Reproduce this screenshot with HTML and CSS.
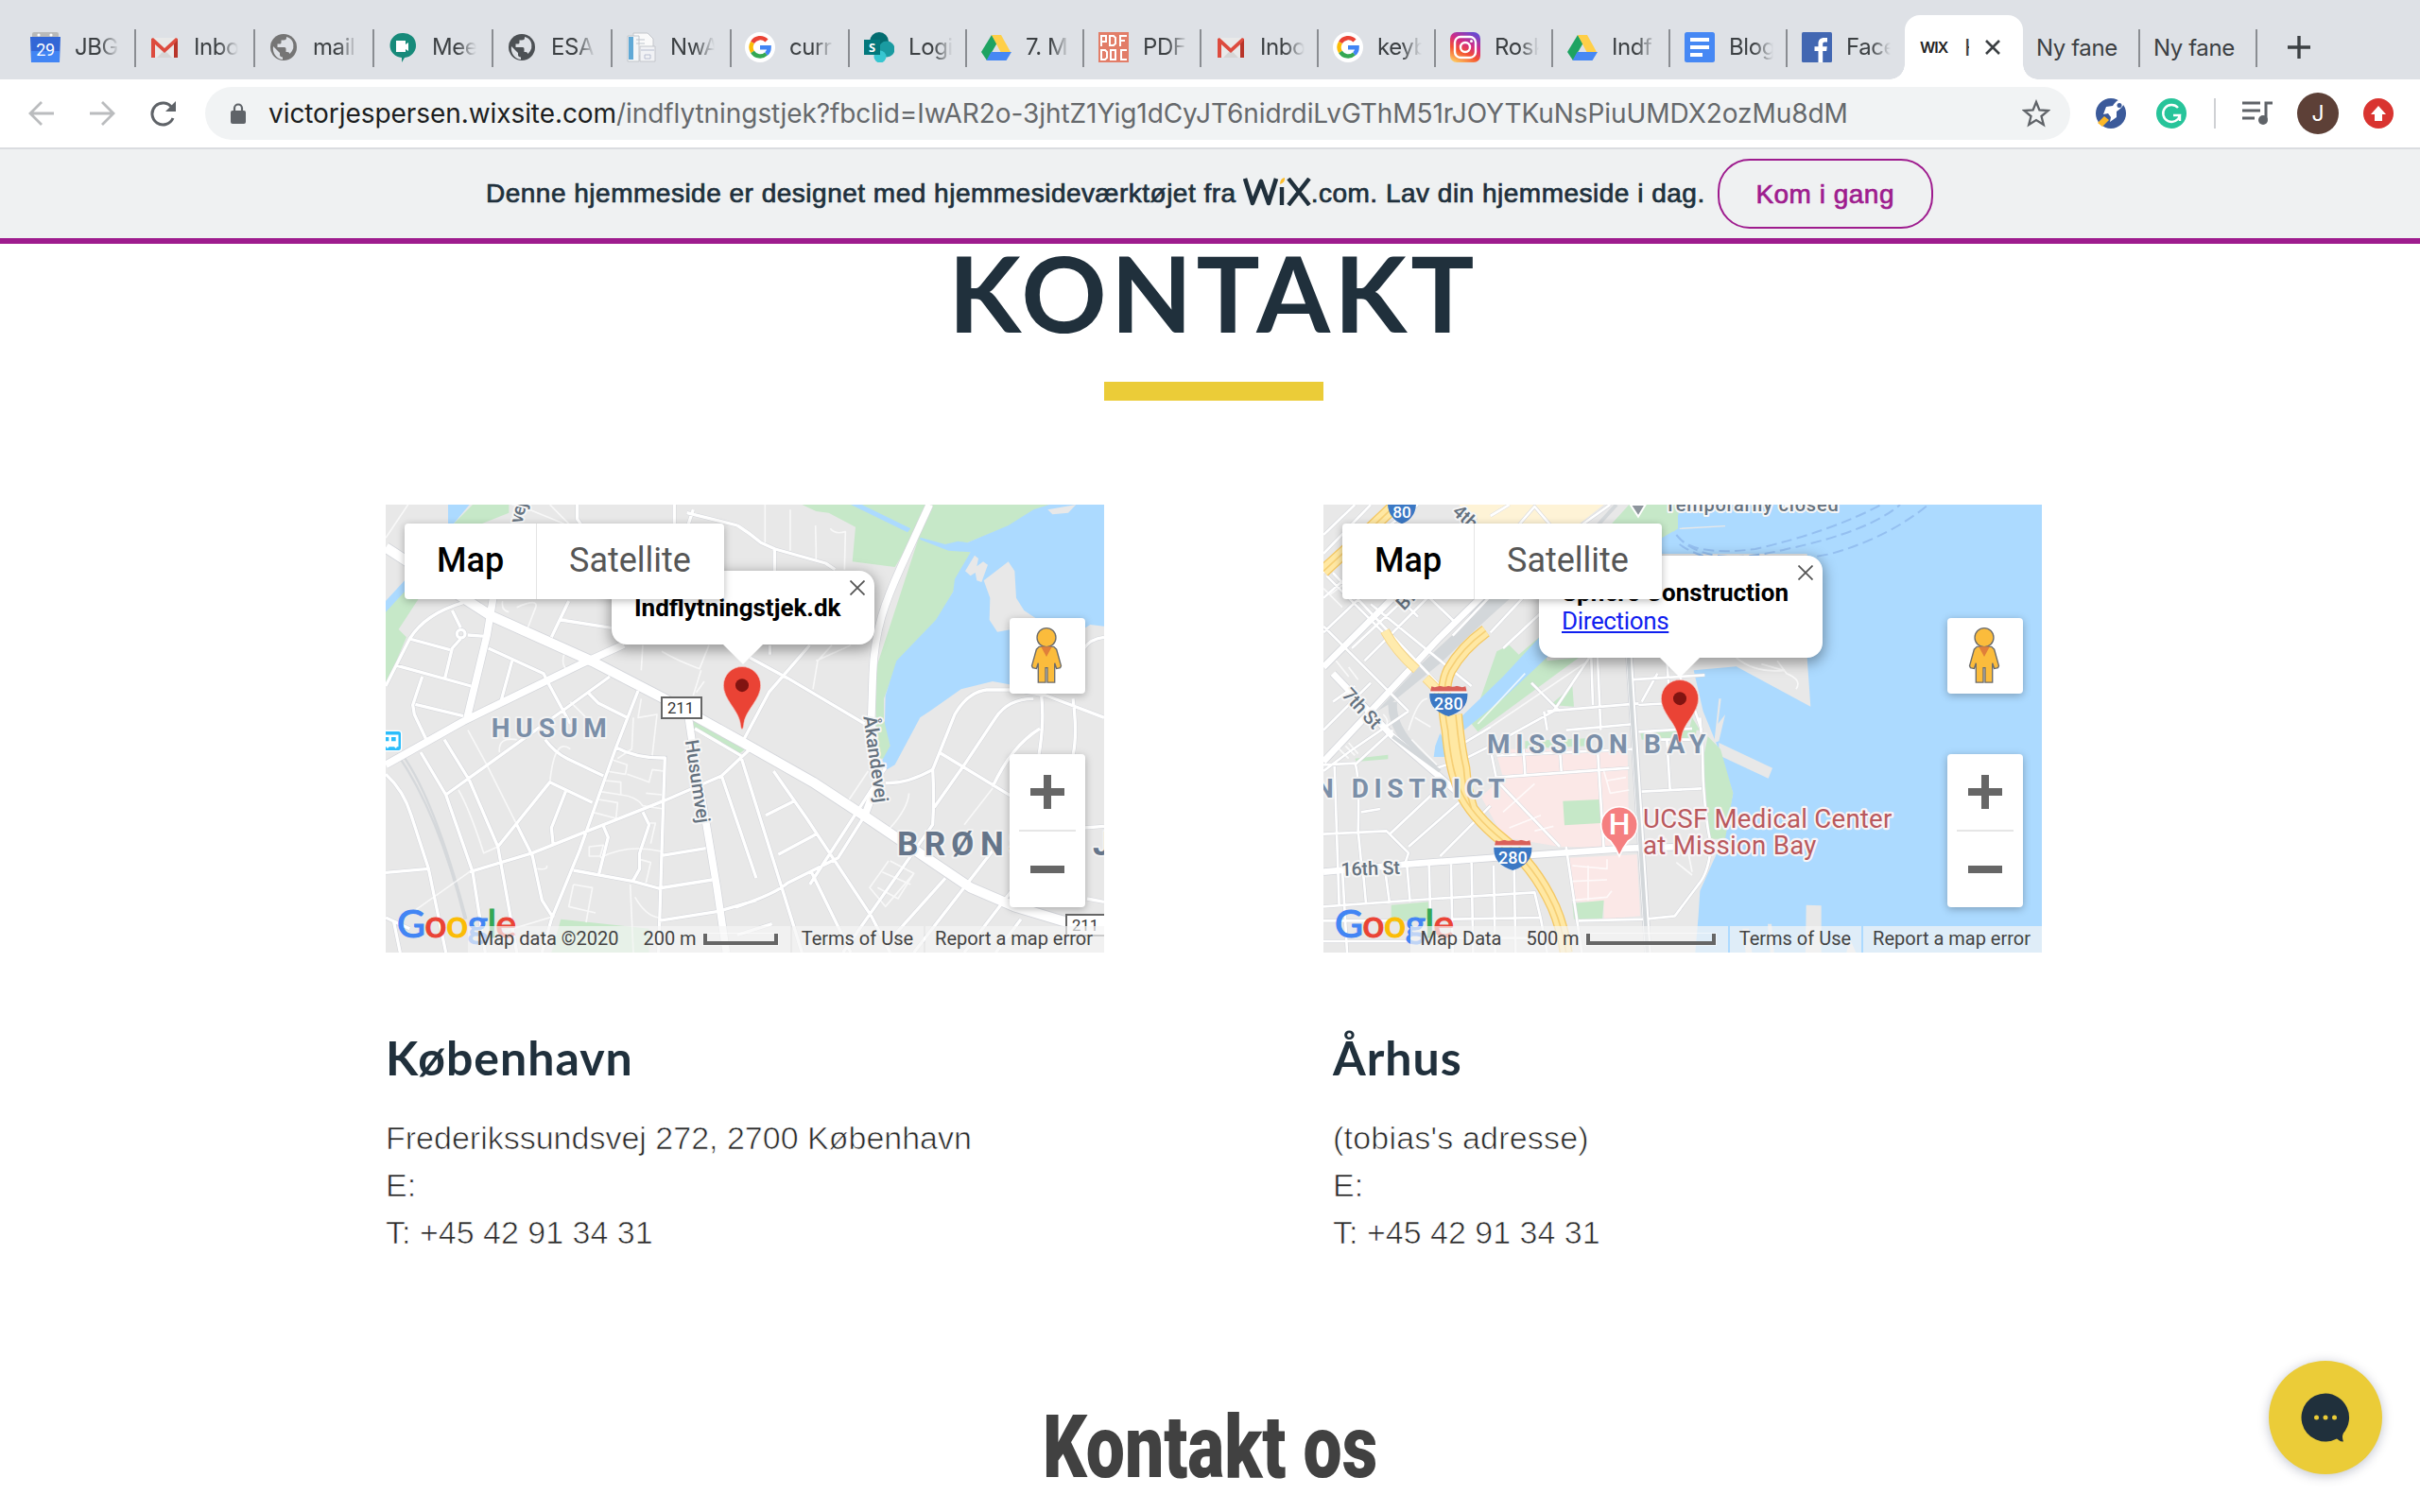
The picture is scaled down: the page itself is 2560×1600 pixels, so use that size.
FILE: index.html
```html
<!DOCTYPE html>
<html lang="da">
<head>
<meta charset="utf-8">
<title>Indflytningstjek</title>
<link rel="stylesheet" href="styles.css">
</head>
<body>
<svg class="sprites" aria-hidden="true">
  <symbol id="i-cal" viewBox="0 0 32 32"><path d="M2 6V2q0-2 2-2h24q2 0 2 2v4z" fill="#b9bab9"/><circle cx="9" cy="3" r="1.6" fill="#fff"/><circle cx="22" cy="3" r="1.6" fill="#fff"/><path d="M0 5h32l-1 27H1z" fill="#3367d6"/><path d="M1 20h30v12H1z" fill="#4285f4"/><text x="16" y="25" text-anchor="middle" font-family="Roboto" font-size="18" fill="#fff">29</text></symbol>
  <symbol id="i-gmail" viewBox="0 0 32 32"><path d="M3 6h26v21H3z" fill="#e9e9e9"/><path d="M8 27l8-8 8 8z" fill="#d5d5d5"/><path d="M2 27V7l2-1 12 11L28 6l2 1v20h-4V13L16 22 6 13v14z" fill="#dd4b3e"/><path d="M26 13l4-5v19h-4z" fill="#b8352a"/></symbol>
  <symbol id="i-globe" viewBox="0 0 32 32"><circle cx="16" cy="16" r="14"/><path d="M5 15l7 7v2q0 2 3 2.500v2.500C8 28 4 22 5 15zM19 5v1q0 2.500-3 2.500h-2.500v2.500q0 1.500-1.500 1.500H9.500V16H17q1.500 0 1.500 1.500V21H20q2 0 2.500 2 6-6 3-13-2-4-6.500-5z" fill="#dee1e6"/></symbol>
  <symbol id="i-meet" viewBox="0 0 32 32"><path d="M16 1a13 13 0 0 1 2 26l-3 5v-5A13 13 0 0 1 16 1z" fill="#178a7a"/><path d="M9 9h10v4l3-2v9l-3-2v3H9z" fill="#fff"/></symbol>
  <symbol id="i-doc" viewBox="0 0 32 32"><path d="M8 1h15l6 6v18H8z" fill="#fafafa" stroke="#c3c6cb"/><path d="M2 4h12v27H2z" fill="#f3f6f8" stroke="#c3c6cb"/><path d="M3 5h5v24H3z" fill="#5fa9d6"/><path d="M11 8h9M11 12h9" stroke="#bcc3cb"/><path d="M15 15h16v16H15z" fill="#f1f2f5" stroke="#c3c6cb"/><path d="M16 19h14M20 24h6v4h-6z" stroke="#b8bed0" fill="none"/></symbol>
  <symbol id="i-google" viewBox="0 0 32 32"><circle cx="16" cy="16" r="16" fill="#fff"/><g fill="none" stroke-width="4.4"><path d="M8 11a9.4 9.4 0 0 1 15-2" stroke="#ea4335"/><path d="M8 21a9.6 9.6 0 0 1 0-10" stroke="#fbbc05"/><path d="M22.500 23A9.500 9.500 0 0 1 8 21" stroke="#34a853"/><path d="M16 16.200h9.600c0 3-1 5.300-3.100 6.800" stroke="#4285f4"/></g></symbol>
  <symbol id="i-sp" viewBox="0 0 32 32"><circle cx="16" cy="10" r="10" fill="#036c70"/><circle cx="24" cy="18" r="8.500" fill="#1a9ba1"/><circle cx="17" cy="26" r="6.500" fill="#37c6d0"/><path d="M0 8h17v16H0z" fill="#03787c"/><text x="8.500" y="21" text-anchor="middle" font-family="Open Sans" font-weight="700" font-size="13" fill="#fff">S</text></symbol>
  <symbol id="i-drive" viewBox="0 0 32 32"><path d="M11 3l5.500 9L6 30 0 21z" fill="#1ea362"/><path d="M11 3h10l10 18H20.500z" fill="#ffcf48"/><path d="M10.500 21H32l-5.500 9H5.500z" fill="#4688f4"/></symbol>
  <symbol id="i-pdf" viewBox="0 0 32 32"><path d="M0 0h32v32H0z" fill="#e27d68"/><g fill="none" stroke="#fff" stroke-width="2"><path d="M3 15V4h5v6H4M12 4h4l2 2v6l-2 2h-4zM23 15V4h7M23 9h5M3 19h4l2 2v6l-2 2H3zM13 19h5v10h-5zM30 19h-6v10h6"/></g></symbol>
  <symbol id="i-insta" viewBox="0 0 32 32"><linearGradient id="ig" x1=".2" y1="1" x2=".7" y2="0"><stop offset="0" stop-color="#fdc760"/><stop offset=".35" stop-color="#f4522f"/><stop offset=".65" stop-color="#d12a86"/><stop offset="1" stop-color="#6a48d0"/></linearGradient><rect width="32" height="32" rx="7" fill="url(#ig)"/><g fill="none" stroke="#fff" stroke-width="2.400"><rect x="5" y="5" width="22" height="22" rx="6"/><circle cx="16" cy="16" r="5"/></g><circle cx="22.500" cy="9.500" r="1.500" fill="#fff"/></symbol>
  <symbol id="i-gdoc" viewBox="0 0 32 32"><rect width="32" height="32" rx="2.500" fill="#4688f4"/><path d="M6 6h20v4H6zM6 14h20v4H6zM6 22h13v4H6z" fill="#fff"/></symbol>
  <symbol id="i-fb" viewBox="0 0 32 32"><rect width="32" height="32" rx="1.500" fill="#4267b2"/><path d="M17.500 32V20h-4v-4.800h4V12c0-4 2.500-6 6-6h3.500v4.500h-2.500c-2 0-2.300 1-2.300 2.500v2.200h4.600l-.6 4.800h-4v12z" fill="#fff"/></symbol>
  <symbol id="i-man" viewBox="0 0 34 62"><g fill="#fbbc3c" stroke="#6b6b6b" stroke-width="1.400"><path d="M9 21h16l3 3 5 18-1 2-4 1-2-6v21h-8V44h-2v16H8V39l-2 6-4-1-1-2 5-18z"/><circle cx="17" cy="11" r="10.300"/></g><path d="M11 21h12l-6 11z" fill="#e07f3a"/></symbol>
  <symbol id="i-pin" viewBox="0 0 120 200"><path d="M60 199c-3 0-4-6-6-20C48 138 1 105 1 60a59 59 0 0 1 118 0c0 45-47 78-53 119-2 14-3 20-6 20z" fill="#ea4335" stroke="#f6c9c5" stroke-width="2"/><circle cx="60" cy="60" r="21" fill="#811411"/></symbol>
  <symbol id="i-280" viewBox="0 0 124 98"><path d="M8 2q10 5 22 0l6-2q12 6 26 0 14 6 26 0l6 2q12 5 22 0l4 18H4z" fill="#d9605a"/><path d="M2 24h120c2 36-18 60-60 73C20 84 0 60 2 24z" fill="#3b78c4"/><path d="M3 20h118" stroke="#fff" stroke-width="5"/><text x="62" y="75" text-anchor="middle" font-family="Roboto" font-weight="500" font-size="54" fill="#fff">280</text></symbol>
</svg>

<header class="browser">
  <div class="tabs">
    <div class="tab"><svg class="fav"><use href="#i-cal"/></svg><span class="lbl">JBG</span></div>
    <div class="tab"><svg class="fav"><use href="#i-gmail"/></svg><span class="lbl">Inbo</span></div>
    <div class="tab"><svg class="fav grey"><use href="#i-globe"/></svg><span class="lbl">mail</span></div>
    <div class="tab"><svg class="fav"><use href="#i-meet"/></svg><span class="lbl">Mee</span></div>
    <div class="tab"><svg class="fav dark"><use href="#i-globe"/></svg><span class="lbl">ESA</span></div>
    <div class="tab"><svg class="fav"><use href="#i-doc"/></svg><span class="lbl">NwA</span></div>
    <div class="tab t125"><svg class="fav"><use href="#i-google"/></svg><span class="lbl">curr</span></div>
    <div class="tab t124"><svg class="fav"><use href="#i-sp"/></svg><span class="lbl">Logi</span></div>
    <div class="tab t124"><svg class="fav"><use href="#i-drive"/></svg><span class="lbl">7. M</span></div>
    <div class="tab t124"><svg class="fav"><use href="#i-pdf"/></svg><span class="lbl">PDF</span></div>
    <div class="tab t124"><svg class="fav"><use href="#i-gmail"/></svg><span class="lbl">Inbo</span></div>
    <div class="tab t124"><svg class="fav"><use href="#i-google"/></svg><span class="lbl">keyb</span></div>
    <div class="tab t124"><svg class="fav"><use href="#i-insta"/></svg><span class="lbl">Rosk</span></div>
    <div class="tab t124"><svg class="fav"><use href="#i-drive"/></svg><span class="lbl">Indf</span></div>
    <div class="tab t124"><svg class="fav"><use href="#i-gdoc"/></svg><span class="lbl">Blog</span></div>
    <div class="tab t124 last"><svg class="fav"><use href="#i-fb"/></svg><span class="lbl">Face</span></div>
    <div class="tab active"><span class="wixfav">WIX</span><span class="sliver">H</span><svg class="x" viewBox="0 0 16 16"><path d="M1 1l14 14M15 1L1 15"/></svg></div>
    <div class="tab t124 wide"><span>Ny fane</span></div>
    <div class="tab t124 wide"><span>Ny fane</span></div>
    <svg class="plus" viewBox="0 0 24 24"><path d="M12 0v24M0 12h24"/></svg>
  </div>
  <div class="toolbar">
    <svg class="nav" viewBox="0 0 28 28"><path d="M27 14H2M14 2L2 14l12 12" fill="none" stroke="#babcbe" stroke-width="2.800"/></svg>
    <svg class="nav" viewBox="0 0 28 28"><path d="M1 14h25M14 2l12 12-12 12" fill="none" stroke="#babcbe" stroke-width="2.800"/></svg>
    <svg class="nav" viewBox="0 0 28 28"><path d="M25 19a11.500 11.500 0 1 1-1-11" fill="none" stroke="#5f6368" stroke-width="3"/><path d="M28 1v11H17z" fill="#5f6368"/></svg>
    <div class="omnibox">
      <svg class="lock" viewBox="0 0 18 22"><path d="M5 9V5.500a4 4 0 0 1 8 0V9" fill="none" stroke="#5f6368" stroke-width="2.200"/><rect x="1" y="8" width="16" height="14" rx="2" fill="#5f6368"/></svg>
      <span class="url"><b>victorjespersen.wixsite.com</b>/indflytningstjek?fbclid=IwAR2o-3jhtZ1Yig1dCyJT6nidrdiLvGThM51rJOYTKuNsPiuUMDX2ozMu8dM</span>
      <svg class="star" viewBox="0 0 30 30"><path d="M15 3l3.400 8.500 9.100.6-7 5.900 2.300 8.900L15 22l-7.800 4.900L9.500 18l-7-5.900 9.100-.6z" fill="none" stroke="#5f6368" stroke-width="2.300"/></svg>
    </div>
    <div class="exts">
      <svg class="e32" viewBox="0 0 32 32"><circle cx="16" cy="16" r="16" fill="#3b5a9a"/><path d="M32 0c-7 0-11 3-14 8l-7 1-3 8 5-1 3 4-1 5 7-5v-6c6-4 9-8 10-14z" fill="#fff"/><circle cx="25" cy="7.500" r="2.500" fill="#3b5a9a"/><path d="M9 19l5 4-7 7-5-4z" fill="#fbb829"/></svg>
      <svg class="e32" viewBox="0 0 32 32"><circle cx="16" cy="16" r="16" fill="#27c49a"/><path d="M23 10a9 9 0 1 0 2 8h-7M25 18v6" fill="none" stroke="#fff" stroke-width="2.400"/></svg>
      <i class="vr"></i>
      <svg class="e32" viewBox="0 0 32 32"><path d="M0 5h19M0 13h19M0 21h13" stroke="#5f6368" stroke-width="3"/><path d="M25 22V5h7" fill="none" stroke="#5f6368" stroke-width="3"/><circle cx="22" cy="23" r="5" fill="#5f6368"/></svg>
      <span class="avatar">J</span>
      <svg class="e32" viewBox="0 0 32 32"><circle cx="16" cy="16" r="16" fill="#d93430"/><path d="M16 8l8 9h-4v7h-8v-7H8z" fill="#fff"/></svg>
    </div>
  </div>
</header>

<div class="banner">
  <span>Denne hjemmeside er designet med hjemmesideværktøjet fra</span>
  <svg class="wix" viewBox="0 0 72 30"><path d="M2 1l8 26L19 4l8 23 8-26" fill="none" stroke="#20303c" stroke-width="4.600" stroke-linejoin="round"/><path d="M41 10v19M48 1l22 28M70 1L48 29" stroke="#20303c" stroke-width="4.400" fill="none"/><path d="M39 7q0-6 5-7 1 5-5 7z" fill="#fbbd2b"/></svg>
  <span>.com. Lav din hjemmeside i dag.</span>
  <a class="cta"><span>Kom i gang</span></a>
</div>

<main class="page">
  <h1>KONTAKT</h1>
  <div class="rule"></div>
  <div class="cols">
    <section>
      <div class="map">
        <svg class="canvas" viewBox="24 24 2280 1422">
          <defs>
            <g id="a1"><path d="M24 160L270 320 360 378 680 522 900 636 1155 778 1380 905 1540 1010 1680 1105 1880 1240 2020 1300 2170 1345 2304 1372"/></g>
            <g id="a2"><path d="M24 850L270 712 640 532 780 468M365 320L345 440 280 710M985 700L1000 800 1045 1060 1075 1240 1105 1446M1750 24L1660 220C1610 330 1575 420 1570 560L1565 710 1585 900 1545 1010"/></g>
            <g id="a3"><path d="M24 600L100 450Q150 370 270 335M100 450L228 485M235 360L262 415M262 450L235 480 212 575M285 438L340 442M60 535L295 600M140 570L110 660 115 690 155 775M118 658L270 695M350 480L525 560 545 600 610 720M425 520L388 655M605 330L550 445M580 390L740 415M735 570L590 675 215 945M665 620L700 655 790 700M530 770Q560 810 600 830L715 885M825 615L755 795 700 950 640 1120 550 1340 520 1446M755 795Q820 830 910 828L905 970 890 1446M215 945L135 810M215 945L300 1190 340 1446M210 770L290 900 380 1110 400 1220 440 1446M290 1190L490 1130 640 1070 905 965 1090 885 1180 800M380 1110L545 905 680 970M595 935L550 1050 555 1100M440 1040L490 1140 520 1280 555 1335M620 1185L810 1220 890 1242 1060 1215M715 1045L730 1080 700 1200M840 1000L860 1040 830 1130 830 1180 808 1220M900 1138L1040 1115M890 1345L1080 1315 1200 1280M1090 885L1200 1210M24 880Q80 930 105 1010L160 1180 215 1446M24 1192L160 1180M24 1335L100 1370M50 1350L70 1446M1005 735L1150 820 1250 1140 1345 1446M1155 780L1240 620 1370 470M1180 510L1300 575 1545 720M1243 500V470M1140 90Q1180 115 1215 145L1260 165 1420 210 1450 230M1258 165V235M980 50L1140 90M980 100L1000 40M940 24V120M632 24V70L660 110M1255 870L1360 1020 1565 1330 1625 1446M1230 1010L1320 965M1270 1135L1390 1070M1140 1300Q1260 1260 1300 1225L1460 1145 1545 1010M1375 1190L1500 1446M1370 1230L1610 860M1475 1446L1760 1040Q1765 960 1760 860M1610 908Q1680 910 1760 865L1830 690Q1870 620 1930 612H2020L2120 630 2304 700M1765 985L1860 850 1960 700Q2000 640 2080 640M1780 810L2010 950M1950 920Q2010 790 2100 735M2105 630Q2115 720 2095 830M2205 640Q2220 750 2205 820M2240 480Q2260 450 2304 445M1700 1446L1960 1110M1630 1400L1800 1210M1860 1446L2010 1250M1960 1446L2040 1340M2250 1275L2304 1285M2240 1050L2304 1045M1140 1390L1250 1355"/><circle cx="263" cy="434" r="13"/></g>
            <g id="a4"><path d="M24 130L95 24M285 740L345 850 440 1040M480 40L590 85M545 24L620 100M395 330Q390 360 415 365M440 350Q510 320 500 350L475 415M590 500Q580 530 600 550M610 650L660 700M385 810Q380 760 440 770M610 800Q560 760 545 905M255 930Q290 990 335 1130L380 1110M835 640L825 700 885 690 870 820M810 700L805 800 760 830M745 835L790 850 785 880 725 870M720 900L770 905V945L705 935M700 960L760 970 755 1020 680 1000M790 880Q820 890 860 905L870 865 905 870M770 945Q820 950 840 980L905 990M850 940L900 945M670 1110L715 1105 705 1140 670 1140zM860 1035L880 1035 865 1100M705 1145Q790 1100 900 1125M830 1150L865 1160 850 1225M505 1180Q540 1185 535 1170M620 1230L680 1240 660 1350M620 1230L605 1300 690 1320M800 1230L810 1446M815 1270Q850 1330 890 1335M120 1310L290 1190M395 1380L560 1330M900 490Q950 520 1020 545L1050 470M1025 550L1000 630M1035 585L1010 620M840 470L835 550M1228 145V24M1308 170V40M1390 200V170L1388 90M1435 100Q1450 120 1483 110L1480 230M1380 610L1395 520 1440 470M1390 520L1500 470M1495 960L1555 870M1625 1050Q1680 990 1685 940M1860 1040L1950 925M1620 1155L1560 1240 1610 1300 1700 1195M1600 1190L1690 1230M1625 1155L1700 1195 1650 1275 1585 1240"/></g>
          </defs>
          <path class="land" d="M24 24h2280v1422H24z"/>
          <path class="park" d="M240 84L300 24H415V50L330 84zM24 350L75 290 130 320 65 420 90 445 24 600zM1345 24L1390 45 1430 50 1515 95 1505 205 1640 222 1760 24zM1750 24H2130L2020 85 1870 145 1880 175 1825 300 1770 400 1650 520 1605 640 1605 710Q1645 770 1610 830L1585 830 1575 560zM1000 705L1165 800 1145 815 1000 735zM580 1340L860 1370V1446H550z"/>
          <path class="water" d="M222 24H290L240 84H222zM24 330L84 265V300L24 365zM1500 24H1535L1690 100 1680 112zM1720 128L1800 150 1840 140 1870 145 2000 90 2080 40 2130 24H2304V410L2260 405 2220 430 2100 560 2020 598 1950 585 1850 610 1750 680 1720 700 1640 850 1615 865 1600 835 1625 790 1608 720 1610 630 1645 520 1770 390 1825 300 1830 260 1880 175 1810 170 1720 135z"/>
          <path class="land" d="M1922 265L2000 205 2020 235 2025 320 2050 360 2110 400 2010 420 1965 428 1940 390 1942 320zM2125 40L2215 24 2190 50 2140 55zM1863 235L1893 185 1905 195 1900 220 1920 205 1935 215 1915 270 1900 265 1895 240 1880 250z"/>
          <g fill="none" stroke="#d5d8db"><path d="M60 815Q190 1000 275 1340M75 815Q180 960 280 1340" stroke-width="7"/></g>
          <g class="casing"><use href="#a3" stroke-width="13"/><use href="#a2" stroke-width="27"/><use href="#a1" stroke-width="36"/></g>
          <g class="road"><use href="#a4" stroke-width="5" opacity=".7"/><use href="#a3" stroke-width="10"/><use href="#a2" stroke-width="23"/><use href="#a1" stroke-width="31"/></g>
          <rect x="0" y="742" width="74" height="64" rx="9" fill="#2bbdfb" stroke="#fff" stroke-width="4"/><path d="M24 757h38v33H24zM28 796l8-8M58 796l-8-8" fill="#fff" stroke="#fff" stroke-width="5"/><path d="M24 762h10v13H24zM42 762h14v13H42z" fill="#2bbdfb"/>
          <g class="area"><text x="359" y="762" textLength="366" font-size="84">HUSUM</text><text class="dk" x="1647 1733 1818 1911 2000 2083 2163 2268" y="1138" font-size="105">BRØNSHØJ</text></g>
          <g class="street" font-size="60"><text transform="translate(974 774) rotate(81.500)" textLength="266">Husumvej</text><text transform="translate(1540 697) rotate(82)" textLength="278">Åkandevej</text><text transform="translate(456 86) rotate(-76)" textLength="68">vej</text></g>
          <g fill="#fff" stroke="#666" stroke-width="6"><path d="M900 636h126v66H900zM2184 1326h130v66h-130z"/></g>
          <g font-family="Roboto" font-size="50" fill="#333"><text x="918" y="687" textLength="84">211</text><text x="2202" y="1377" textLength="84">211</text></g>
        </svg>
        <div class="info one"><strong>Indflytningstjek.dk</strong><svg class="ix" viewBox="0 0 16 16"><path d="M.5.5l15 15M15.500.5l-15 15"/></svg></div>
        <svg class="pin p1"><use href="#i-pin"/></svg>
        <div class="types"><span class="on">Map</span><span class="off">Satellite</span></div>
        <div class="pegman"><svg><use href="#i-man"/></svg></div>
        <div class="zoomer"><i class="zp"></i><hr><i class="zm"></i></div>
        <div class="glogo"><i class="b">G</i><i class="r">o</i><i class="y">o</i><i class="b">g</i><i class="g">l</i><i class="r">e</i></div>
        <div class="attrib"><span class="a1">Map data ©2020</span><span class="a2">200 m<i class="scale s1"></i></span><span class="a3">Terms of Use</span><span class="a4">Report a map error</span></div>
      </div>
      <div class="info-text">
        <h2>København</h2>
        <p>Frederikssundsvej 272, 2700 København<br>E:<br>T: +45 42 91 34 31</p>
      </div>
    </section>
    <section>
      <div class="map">
        <svg class="canvas" viewBox="30 24 2280 1422">
          <defs>
            <g id="c2"><path d="M30 840L400 445 620 230M30 540L510 60M60 560L250 760 390 880 480 960 610 1110M30 1190L300 1165 640 1140 1000 1115 1170 1110M1000 500L1060 1446"/></g>
            <g id="c3"><path d="M30 180L180 24M30 120L130 24M30 240L330 24M40 250L250 460M60 240L400 600M30 410L300 680M130 180L330 380M150 110L450 400M180 340L500 600M30 320L120 240M30 430L240 230M120 480L280 330M160 520L380 300M300 680L110 810 30 870M250 740L130 850M180 590L30 740M60 650L130 600M30 850L130 845Q145 880 140 1060L150 1160M65 855L80 1300M30 1070L230 1060 300 1130 290 1160M400 1140L560 980M300 1110L460 970M240 1070L400 920M210 990L150 1000M90 1180L105 1446M155 1180L165 1290M225 1180L240 1290M295 1170L305 1285M365 1165L370 1340M435 1165L440 1446M500 1160L505 1446M570 1170L575 1446M635 1170L640 1446M30 1300L380 1275 700 1255 720 1340 740 1446M440 1340L720 1335M440 1400H740M30 1345H250M30 1410H300M390 860L480 830 560 790 760 680 880 500M560 800L580 900 780 1110M580 890L1000 860M580 820L1020 800M740 680L1030 655M800 740L1020 720M665 800L670 880M780 800L785 870M900 800L920 1120M730 680L740 740M880 510L885 660M900 510L910 740M1000 580L1240 565M1030 660L1200 650M1030 745L1200 735M1050 770H1230M1120 520L1130 660M1120 770L1130 930M1040 935L1230 925M1040 650L1090 560M1160 560L1180 640M1225 700Q1235 800 1235 900Q1245 1050 1260 1100Q1255 1190 1220 1230L1145 1330 1050 1340 840 1345M800 1110Q820 1240 850 1446M1200 650L1230 740M640 230L440 440M700 280L560 430M750 340L600 480M800 380L720 460M460 790L560 730M690 590L780 680M450 60L560 170M640 100L700 30 760 100M560 60L620 24M820 110L940 24M570 190L640 100"/></g>
            <g id="c4"><path d="M530 750L870 520M520 720L670 560M600 1000L700 910M620 1050L720 1010M700 1060L760 1045M300 740Q330 640 360 640M310 770L390 850M320 700L370 730M210 740Q250 720 220 690M30 290L90 350M50 310L90 280M100 790L130 820M80 800L110 830M110 780L140 815M110 540L140 580M70 520L110 570M920 870L940 940 1000 930M930 900L990 890M820 1170L930 1180V1150M820 1220L930 1215M870 1170V1280M820 1280L930 1270 945 1250M1140 1100L1180 1120M1150 1160L1200 1200M1180 1090L1200 1190M1340 510Q1400 560 1495 550M1470 520L1500 560Q1550 580 1530 610M1420 530L1490 550"/></g>
            <g id="hw"><path d="M30 235Q100 170 180 100L260 24M545 425Q470 480 430 550Q400 610 425 740Q435 860 465 930Q500 1010 600 1090Q700 1170 760 1300Q790 1370 800 1446M450 690Q460 800 475 860Q480 930 500 990"/></g>
          </defs>
          <path class="land" d="M30 24h2280v1422H30z"/>
          <path fill="#fef3d6" d="M460 24H920L810 110H530z"/>
          <path class="park" d="M1000 24H1165V100L1100 140V90H940zM580 490L620 470 650 500 720 440 740 520 840 510 520 745 500 720zM750 660L820 600 825 665zM1035 745L1215 730 1210 770 1040 770zM1200 700L1225 740H1190zM245 1295L365 1285V1340L245 1350zM130 830L235 818V832L135 840zM670 775L880 765V790L670 798z"/>
          <path fill="#fbe8e7" d="M575 800H995L1000 1115 780 1110 600 1080 530 950 600 890zM810 1145L1025 1135 1035 1330 920 1340V1285H825z"/>
          <path class="park" d="M790 965L905 960 910 1035 795 1042zM820 1290L920 1280 915 1340H825z"/>
          <path class="water" d="M720 440L760 490 600 640 470 745 465 700 600 570zM385 790L400 750 420 780V825H380z"/>
          <path class="water" d="M1165 24H2310V1446H1210L1220 1330 1225 1250 1265 1160 1300 1085 1330 940 1280 790 1235 680 1205 550 1340 538 1576 665 1565 510V180H1104V130L1155 100V60z"/>
          <path class="land" d="M1285 780L1455 860 1442 893 1285 820zM1270 780L1285 640H1292L1282 720 1305 690 1285 775zM1562 1295L1610 1297V1446H1560zM1360 1370H1380L1390 1446H1370zM1440 1355H1452L1460 1446H1448zM1700 1400L1720 1446H1690zM1160 98L1305 90V94L1160 102z"/>
          <path class="park" d="M1250 760L1290 800 1330 940 1305 1085H1255L1235 830zM1140 50L1155 60V100L1140 110z"/>
          <g fill="none" stroke="#94bff0" stroke-width="6" stroke-dasharray="34 16"><path d="M1150 120Q1200 190 1400 165 1640 110 1800 24M1150 120Q1240 230 1500 165 1760 110 1860 24M1160 150Q1300 250 1640 180 1820 130 1950 24"/></g>
          <path d="M620 324Q500 430 410 520L250 650 200 680 340 530 480 400 520 324z" fill="#d3d7da"/>
          <path d="M250 650Q240 750 390 870" fill="none" stroke="#d3d7da" stroke-width="28"/>
          <g class="casing"><use href="#c3" stroke-width="11"/><use href="#c2" stroke-width="25"/></g>
          <g class="road"><use href="#c4" stroke-width="5" opacity=".75"/><use href="#c3" stroke-width="8"/><use href="#c2" stroke-width="20"/></g>
          <path d="M998 510L1058 1446M900 90L960 24M250 760L400 870" fill="none" stroke="#d3d7da" stroke-width="12"/>
          <path d="M225 425Q260 490 325 547M355 575L410 630" fill="none" stroke="#f6d587" stroke-width="31"/><path d="M225 425Q260 490 325 547M355 575L410 630" fill="none" stroke="#ffebad" stroke-width="25"/>
          <g fill="none"><use href="#hw" stroke="#f4c864" stroke-width="42"/><use href="#hw" stroke="#ffe8a3" stroke-width="34"/><use href="#hw" stroke="#f6cf75" stroke-width="5"/></g>
          <svg x="365" y="599" width="124" height="98"><use href="#i-280"/></svg>
          <svg x="569" y="1088" width="124" height="98"><use href="#i-280"/></svg>
          <path d="M234 10h90c2 36-12 62-45 75C246 72 232 46 234 10z" fill="#3b78c4"/><text x="279" y="66" text-anchor="middle" font-family="Roboto" font-weight="500" font-size="52" fill="#fff">80</text>
          <path d="M1004 24H1052L1029 62z" fill="#8d949c" stroke="#fff" stroke-width="6"/>
          <g class="area" font-size="84"><text x="549" y="812" textLength="446">MISSION</text><text x="1047" y="812" textLength="196">BAY</text><text x="3" y="954" textLength="60">N</text><text x="119" y="954" textLength="486">DISTRICT</text></g>
          <g class="street" font-size="60"><text transform="translate(86 630) rotate(47)" textLength="150">7th St</text><text x="86" y="1203" transform="rotate(-2 86 1203)" textLength="188">16th St</text><text transform="translate(436 50) rotate(43)" textLength="84">4th</text><text transform="translate(285 362) rotate(-45)" textLength="62">Br</text><text x="1112" y="46" textLength="552">Temporarily closed</text></g>
          <g class="poi" font-size="83"><text x="1044" y="1049" textLength="790">UCSF Medical Center</text><text x="1044" y="1133" textLength="550">at Mission Bay</text></g>
          <path d="M969 1140c-8-20-15-32-28-48a58 58 0 1 1 56 0c-13 16-20 28-28 48z" fill="#f57f80" stroke="#fff" stroke-width="5"/><text x="969" y="1070" text-anchor="middle" font-family="Roboto" font-size="96" font-weight="500" fill="#fff">H</text>
        </svg>
        <div class="info two"><strong>Sphere Construction</strong><a>Directions</a><svg class="ix" viewBox="0 0 16 16"><path d="M.5.5l15 15M15.500.5l-15 15"/></svg></div>
        <svg class="pin p2"><use href="#i-pin"/></svg>
        <div class="types"><span class="on">Map</span><span class="off">Satellite</span></div>
        <div class="pegman"><svg><use href="#i-man"/></svg></div>
        <div class="zoomer"><i class="zp"></i><hr><i class="zm"></i></div>
        <div class="glogo"><i class="b">G</i><i class="r">o</i><i class="y">o</i><i class="b">g</i><i class="g">l</i><i class="r">e</i></div>
        <div class="attrib"><span class="a1">Map Data</span><span class="a2">500 m<i class="scale s2"></i></span><span class="a3">Terms of Use</span><span class="a4">Report a map error</span></div>
      </div>
      <div class="info-text shifted">
        <h2>Århus</h2>
        <p><span class="addr">(tobias's adresse)</span><br>E:<br>T: +45 42 91 34 31</p>
      </div>
    </section>
  </div>
  <h3>Kontakt os</h3>
</main>
<button class="chat" aria-label="Chat"><svg viewBox="0 0 52 52"><path d="M26 .5a25.500 25.500 0 1 0 12 48q3 3 7 3-2-5 0-9A25.500 25.500 0 0 0 26 .5z" fill="#20303c"/><g fill="#ebcc38"><circle cx="16.500" cy="26" r="2.500"/><circle cx="26" cy="26" r="2.500"/><circle cx="35.500" cy="26" r="2.500"/></g></svg></button>
</body>
</html>
```
FILE: styles.css
```css
* { box-sizing: border-box; }
body { margin: 0; width: 2560px; height: 1600px; overflow: hidden; background: #fff; font-family: Roboto, sans-serif; position: relative; }
.sprites { position: absolute; width: 0; height: 0; }

/* browser chrome */
.browser { height: 158px; border-bottom: 2px solid #dadce0; font-family: Inter, sans-serif; }
.tabs { height: 84px; background: #dee1e6; display: flex; align-items: flex-end; padding-left: 18px; }
.tab { width: 126px; height: 68px; padding-left: 14px; display: flex; align-items: center; gap: 15px; font-size: 24px; letter-spacing: -.4px; color: #3c4043; position: relative; flex: none; }
.tab::after { content: ""; position: absolute; right: 0; top: 15px; width: 2px; height: 40px; background: #8a8d92; }
.t125 { width: 125px; }
.t124 { width: 124px; padding-left: 15px; }
.last::after, .active::after { display: none; }
.tab svg.fav { width: 32px; height: 32px; flex: none; }
.fav.grey { fill: #757575; }
.fav.dark { fill: #4c5054; }
.lbl { width: 48px; overflow: hidden; white-space: nowrap; line-height: 34px; -webkit-mask-image: linear-gradient(90deg, #000 55%, transparent 98%); mask-image: linear-gradient(90deg, #000 55%, transparent 98%); }
.wide { padding-left: 14px; white-space: nowrap; }
.active { width: 125px; background: #fff; border-radius: 16px 16px 0 0; gap: 0; padding-left: 16px; height: 68px; }
.active::before { content: ""; position: absolute; left: -16px; right: -16px; bottom: 0; height: 16px; background: radial-gradient(circle at 0 0, transparent 15.500px, #fff 16px) left / 16px 16px no-repeat, radial-gradient(circle at 100% 0, transparent 15.500px, #fff 16px) right / 16px 16px no-repeat; }
.wixfav { width: 47px; font-size: 16px; font-weight: 600; letter-spacing: -1px; color: #222; }
.sliver { width: 5px; overflow: hidden; margin-right: 17px; }
.x { width: 16px; height: 16px; stroke: #3c4043; stroke-width: 2.600; }
.plus { width: 24px; height: 24px; margin: 0 0 22px 32px; stroke: #3c4043; stroke-width: 3.400; }
.toolbar { height: 72px; display: flex; align-items: center; padding-left: 30px; }
.nav { width: 28px; height: 28px; margin-right: 36px; flex: none; }
.nav:nth-child(3) { margin-right: 31px; }
.omnibox { width: 1973px; height: 56px; border-radius: 28px; background: #f1f3f4; display: flex; align-items: center; padding-left: 26px; position: relative; flex: none; }
.lock { width: 18px; height: 22px; margin-right: 23px; }
.url { font-size: 28px; color: #66696c; white-space: nowrap; letter-spacing: -.07px; }
.url b { font-weight: 400; color: #1c1e20; }
.star { width: 30px; height: 30px; margin-left: auto; margin-right: 21px; }
.exts { display: flex; align-items: center; margin-left: 27px; }
.e32 { width: 32px; height: 32px; margin-right: 32px; }
.vr { width: 2px; height: 32px; background: #cfd1d4; margin: 0 28px 0 -3px; }
.avatar { width: 44px; height: 44px; border-radius: 50%; background: #5d4037; color: #fff; font-size: 23px; display: flex; align-items: center; justify-content: center; margin: 0 26px 0 -6px; }

/* promotional banner */
.banner { height: 100px; background: #eff1f2; border-bottom: 6px solid #9e1c8e; display: flex; align-items: center; padding-left: 514px; font: 28px/34px "Liberation Sans", sans-serif; letter-spacing: .5px; color: #20303c; -webkit-text-stroke: .7px currentColor; white-space: nowrap; }
.wix { width: 72px; height: 30px; margin: 0 0 4px 7px; }
.cta { width: 228px; height: 74px; margin-left: 13px; border: 2px solid #9e1c8e; border-radius: 34px; color: #9e1c8e; display: flex; align-items: center; justify-content: center; padding-top: 2px; }

/* page */
.page { position: relative; }
h1 { margin: 0; height: 146px; text-align: center; font: 700 112px/102px Lato, sans-serif; color: #20303c; letter-spacing: 4.300px; padding-left: 7px; }
.rule { width: 232px; height: 20px; margin: 0 0 110px 1168px; background: #ebcc38; }
.cols { display: flex; gap: 232px; padding-left: 408px; }
.cols section { width: 760px; }
.map { position: relative; width: 760px; height: 474px; overflow: hidden; }
.canvas { display: block; width: 760px; height: 474px; }
.land { fill: #e8e8e8; }
.park { fill: #c6e8c8; }
.water { fill: #acdaff; }
.casing { fill: none; stroke: #d3d5da; }
.road { fill: none; stroke: #fff; stroke-linejoin: round; }
.area text { font-family: Roboto, sans-serif; font-weight: 700; fill: #7b8fa8; stroke: #f2f2f2; stroke-width: 12px; paint-order: stroke; stroke-linejoin: round; }
.area .dk { fill: #65758a; }
.street text { font-family: Roboto, sans-serif; font-weight: 500; fill: #65727f; stroke: #f6f6f6; stroke-width: 12px; paint-order: stroke; stroke-linejoin: round; }
.poi text { font-family: Roboto, sans-serif; fill: #b9595e; stroke: #f8f4f6; stroke-width: 13px; paint-order: stroke; stroke-linejoin: round; }

/* map overlays */
.info { position: absolute; background: #fff; border-radius: 16px; box-shadow: 0 4px 14px 2px rgba(0, 0, 0, .35); font-size: 26px; line-height: 30px; color: #000; padding-left: 24px; display: flex; flex-direction: column; white-space: nowrap; }
.info::after { content: ""; position: absolute; top: 100%; width: 0; height: 0; border: 21px solid transparent; border-top-color: #fff; border-bottom: 0; }
.info strong, .info a { align-self: flex-start; }
.info a { color: #1020f0; text-decoration: underline; letter-spacing: -.35px; }
.one { left: 239px; top: 70px; width: 278px; height: 78px; padding-top: 24px; }
.one::after { left: 118px; }
.two { left: 228px; top: 54px; width: 300px; height: 108px; padding-top: 24px; }
.two::after { left: 128px; }
.ix { position: absolute; right: 10px; top: 10px; width: 16px; height: 16px; stroke: #555; stroke-width: 1.800; }
.pin { position: absolute; width: 40px; height: 67px; }
.p1 { left: 357px; top: 171px; }
.p2 { left: 357px; top: 185px; }
.types { position: absolute; left: 20px; top: 20px; width: 338px; height: 80px; display: flex; background: #fff; border-radius: 4px; box-shadow: 0 2px 8px rgba(0, 0, 0, .28); font-size: 36px; line-height: 79px; }
.on { width: 140px; padding-left: 34px; font-weight: 500; color: #000; border-right: 1px solid #e4e4e4; }
.off { padding-left: 34px; color: #565656; }
.pegman, .zoomer { position: absolute; left: 660px; width: 80px; background: #fff; border-radius: 4px; box-shadow: 0 2px 8px rgba(0, 0, 0, .28); }
.pegman { top: 120px; height: 80px; padding: 10px 0 0 22px; }
.pegman svg { width: 34px; height: 60px; }
.zoomer { top: 264px; height: 162px; display: flex; flex-direction: column; align-items: center; }
.zp { width: 36px; height: 36px; margin-top: 22px; background: linear-gradient(#666, #666) center / 36px 8px no-repeat, linear-gradient(#666, #666) center / 8px 36px no-repeat; }
.zoomer hr { width: 60px; height: 2px; border: 0; margin: 22px 0 36px; background: #e6e6e6; }
.zm { width: 36px; height: 8px; background: #666; }
.glogo { position: absolute; left: 12px; top: 420px; font: 400 41px/46px Lato, sans-serif; display: flex; letter-spacing: -.6px; }
.glogo i { font-style: normal; -webkit-text-stroke: 1.200px currentColor; }
.b { color: #4285f4; }
.r { color: #ea4335; }
.y { color: #fbbc05; }
.g { color: #34a853; }
.attrib { position: absolute; right: 0; bottom: 0; height: 28px; display: flex; font-size: 20px; line-height: 26px; color: #444; white-space: nowrap; }
.attrib > span { background: rgba(245, 245, 245, .7); padding: 0 12px 0 10px; }
.attrib .a1 { padding-right: 14px; }
.attrib .a2 { display: flex; padding: 0 13px 0 12px; margin-right: 2px; }
.attrib .a3 { padding-right: 11px; margin-right: 2px; }
.scale { height: 12px; margin: 8px 0 0 7px; border: solid #666; border-width: 0 4px 4px; outline: 1px solid rgba(255, 255, 255, .5); }
.s1 { width: 79px; }
.s2 { width: 137px; }

/* addresses */
.info-text { padding-top: 81px; }
.shifted { padding-left: 10px; }
h2 { margin: 0; font: 700 50px/60px Lato, sans-serif; letter-spacing: 1px; color: #20303c; }
p { margin: 30px 0 0; font: 34px/50px "Liberation Sans", sans-serif; color: #2a2a2a; -webkit-text-stroke: .7px #fff; }
.addr { letter-spacing: .2px; }
h3 { position: absolute; left: 1103px; top: 1220px; margin: 0; font: 900 92px/108px Roboto, sans-serif; color: #414141; white-space: nowrap; transform: scaleX(.795); transform-origin: 0 0; }
.chat { position: absolute; left: 2400px; top: 1440px; width: 120px; height: 120px; border: 0; border-radius: 50%; background: #ebcc38; box-shadow: 0 2px 12px rgba(0, 20, 60, .25); display: flex; align-items: center; justify-content: center; padding: 0; }
.chat svg { width: 52px; height: 52px; }
```
